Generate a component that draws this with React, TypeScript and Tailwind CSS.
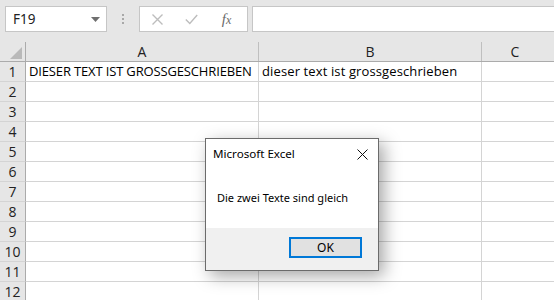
import React from "react";

const cellFont = { fontFamily: '"Open Sans", "Noto Sans", sans-serif' };
const uiFont = { fontFamily: '"Noto Sans", "Open Sans", sans-serif' };

const rows = [1, 2, 3, 4, 5, 6, 7, 8, 9, 10, 11, 12];

export default function App() {
  return (
    <div className="relative w-[554px] h-[300px] overflow-hidden bg-white" style={uiFont}>
      {/* Top bar */}
      <div className="h-[42px] bg-[#e6e6e6] flex items-start pt-[6px] pl-[5px]">
        <div className="w-[102px] h-[26px] bg-white border border-[#c6c6c6] flex items-center justify-between pl-[7px] pr-[6px]">
          <span className="text-[13.5px] text-[#222]" style={uiFont}>F19</span>
          <svg width="9" height="5" viewBox="0 0 9 5"><path d="M0 0h9L4.5 5z" fill="#6f6f6f" /></svg>
        </div>
        <div className="w-[32px] h-[26px] flex flex-col items-center justify-center gap-[2px]">
          <div className="w-[2px] h-[2px] bg-[#a8a8a8]" />
          <div className="w-[2px] h-[2px] bg-[#a8a8a8]" />
          <div className="w-[2px] h-[2px] bg-[#a8a8a8]" />
        </div>
        <div className="w-[109px] h-[26px] bg-white border border-[#c6c6c6] flex items-center">
          <div className="w-[34px] flex justify-center">
            <svg width="11" height="11" viewBox="0 0 11 11"><path d="M0.5 0.5l10 10M10.5 0.5l-10 10" stroke="#bdbdbd" strokeWidth="1.4" /></svg>
          </div>
          <div className="w-[34px] flex justify-center">
            <svg width="13" height="11" viewBox="0 0 13 11"><path d="M0.8 5.5l4 4L12.2 1" stroke="#bdbdbd" strokeWidth="1.4" fill="none" /></svg>
          </div>
          <div className="flex-1 flex justify-center pr-[2px]">
            <span className="text-[15px] italic text-[#6a6a6a] leading-none" style={{ fontFamily: '"Liberation Serif", serif' }}>
              f<span className="text-[12px]">x</span>
            </span>
          </div>
        </div>
        <div className="ml-[4px] flex-1 h-[26px] bg-white border border-[#c6c6c6] border-r-0" />
      </div>

      {/* Grid */}
      <div style={cellFont}>
        {/* Header row */}
        <div className="flex h-[20px] bg-[#e6e6e6] border-b border-[#ababab]">
          <div className="w-[26px] shrink-0 border-r border-[#ababab] relative">
            <svg className="absolute left-[10px] top-[5px]" width="12" height="12" viewBox="0 0 12 12"><path d="M12 0v12H0z" fill="#b9b9b9" /></svg>
          </div>
          <div className="w-[233px] shrink-0 border-r border-[#bfbfbf] flex items-center justify-center text-[14px] text-[#222] leading-none">A</div>
          <div className="w-[223px] shrink-0 border-r border-[#bfbfbf] flex items-center justify-center text-[14px] text-[#222] leading-none">B</div>
          <div className="flex-1 flex items-center justify-center text-[14px] text-[#222] leading-none pr-[6px]">C</div>
        </div>
        {rows.map((r) => (
          <div key={r} className="flex h-[20px]">
            <div className="w-[26px] shrink-0 bg-[#e6e6e6] border-r border-[#ababab] border-b border-b-[#d4d4d4] flex items-center justify-center text-[14px] text-[#222] leading-none">
              {r}
            </div>
            <div className="w-[233px] shrink-0 border-r border-b border-[#d4d4d4] flex items-center pl-[3px] text-[13px] tracking-[-0.15px] text-black leading-none whitespace-nowrap">
              {r === 1 ? "DIESER TEXT IST GROSSGESCHRIEBEN" : ""}
            </div>
            <div className="w-[223px] shrink-0 border-r border-b border-[#d4d4d4] flex items-center pl-[3px] text-[13px] tracking-[0.12px] text-black leading-none whitespace-nowrap">
              {r === 1 ? "dieser text ist grossgeschrieben" : ""}
            </div>
            <div className="flex-1 border-b border-[#d4d4d4]" />
          </div>
        ))}
      </div>

      {/* Dialog */}
      <div
        className="absolute left-[205px] top-[138px] w-[174px] h-[133px] bg-white border border-[#6b6b6b] flex flex-col shadow-[5px_5px_16px_rgba(0,0,0,0.35)]"
        style={uiFont}
      >
        <div className="h-[30px] flex items-center justify-between pl-[7px] pr-[10px]">
          <span className="text-[11.6px] text-black">Microsoft Excel</span>
          <svg width="11" height="11" viewBox="0 0 11 11"><path d="M0.5 0.5l10 10M10.5 0.5l-10 10" stroke="#111" strokeWidth="1" /></svg>
        </div>
        <div className="h-[59px] flex items-center pl-[11px]">
          <span className="text-[11px] text-black">Die zwei Texte sind gleich</span>
        </div>
        <div className="flex-1 bg-[#f0f0f0] flex items-start justify-end pt-[9px] pr-[16px]">
          <div className="w-[73px] h-[21px] bg-[#e1e1e1] border-2 border-[#0078d7] flex items-center justify-center text-[12px] text-black">
            OK
          </div>
        </div>
      </div>
    </div>
  );
}
